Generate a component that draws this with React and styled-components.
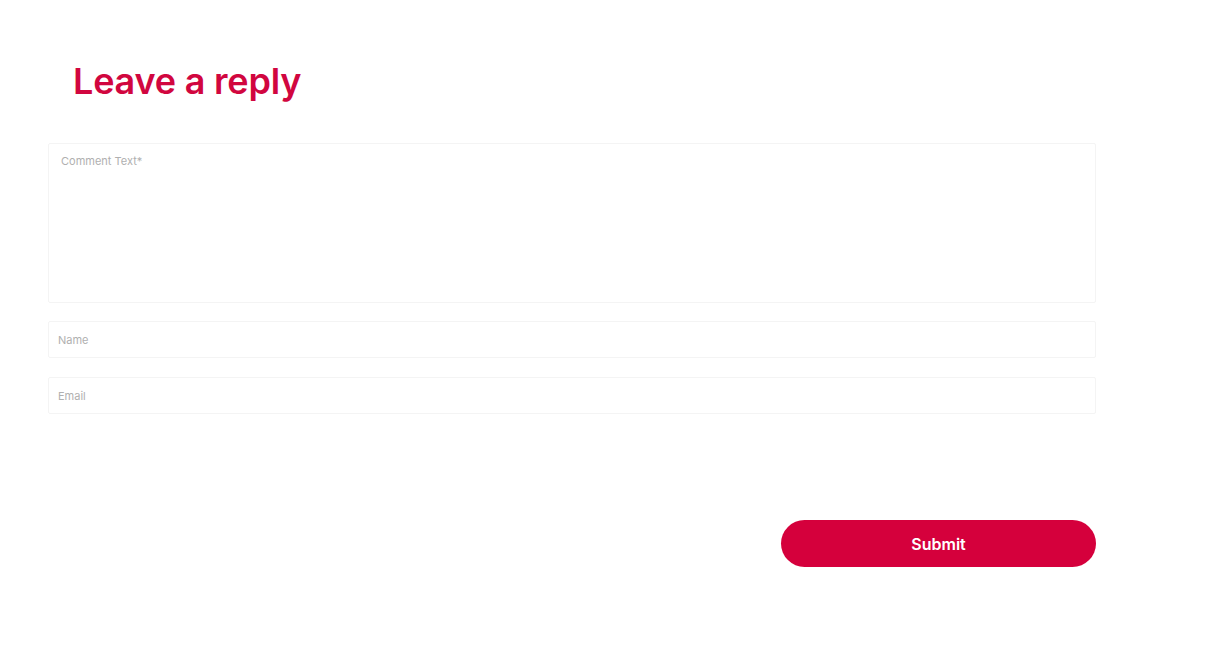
import React from 'react';
import styled, { createGlobalStyle } from 'styled-components';

const GlobalStyle = createGlobalStyle`
  body {
    margin: 0;
    background: #fff;
    font-family: Inter, "Noto Sans", sans-serif;
  }
`;

const Page = styled.div`
  padding: 57px 120px 0 48px;
`;

const Title = styled.h2`
  margin: 0 0 38px 25px;
  font-size: 36px;
  font-weight: 600;
  color: #d1063f;
  letter-spacing: -0.2px;
  line-height: 48px;
`;

const Form = styled.form`
  display: flex;
  flex-direction: column;
  width: 1048px;
`;

const TextArea = styled.textarea`
  box-sizing: border-box;
  height: 160px;
  padding: 10px 12px;
  border: 1px solid #f4f4f4;
  border-radius: 2px;
  font-family: inherit;
  font-size: 11px;
  resize: none;
  outline: none;
  margin-bottom: 18px;
  caret-color: #999;
  &::placeholder { color: #b0b0b0; }
`;

const Input = styled.input`
  box-sizing: border-box;
  height: 37px;
  padding: 0 9px;
  border: 1px solid #f4f4f4;
  border-radius: 2px;
  font-family: inherit;
  font-size: 11px;
  outline: none;
  margin-bottom: ${p => p.gap}px;
  &::placeholder { color: #b0b0b0; }
`;

const Actions = styled.div`
  display: flex;
  justify-content: flex-end;
`;

const Submit = styled.button`
  width: 315px;
  height: 47px;
  border: none;
  border-radius: 24px;
  background: #d5003c;
  color: #fff;
  font-family: inherit;
  font-size: 16px;
  font-weight: 600;
  cursor: pointer;
`;

const App = () => (
  <>
    <GlobalStyle />
    <Page>
      <Title>Leave a reply</Title>
      <Form onSubmit={e => e.preventDefault()}>
        <TextArea placeholder="Comment Text*" autoFocus />
        <Input placeholder="Name" gap={19} />
        <Input placeholder="Email" gap={106} />
        <Actions>
          <Submit type="submit">Submit</Submit>
        </Actions>
      </Form>
    </Page>
  </>
);

export default App;
